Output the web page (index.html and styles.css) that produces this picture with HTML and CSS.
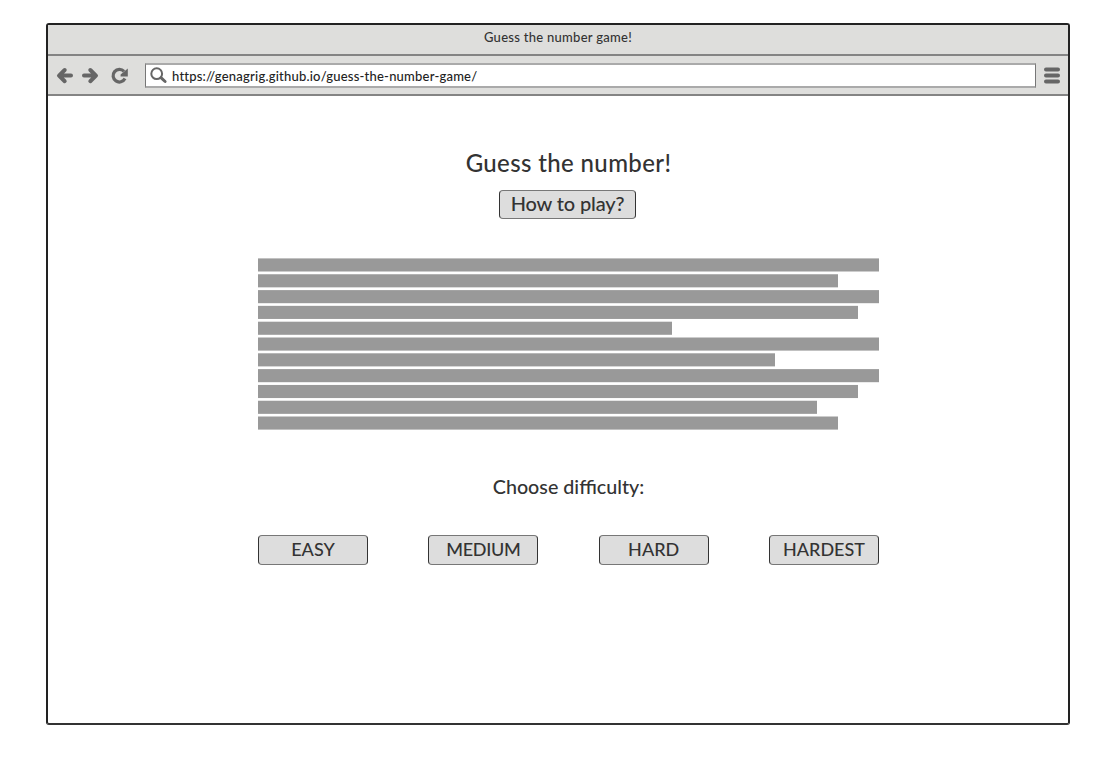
FILE: index.html
```html
<!DOCTYPE html>
<html lang="en">
<head>
<meta charset="utf-8">
<title>Guess the number game!</title>
<link rel="stylesheet" href="styles.css">
</head>
<body>
<div class="window">
  <header class="titlebar"><span class="window-title">Guess the number game!</span></header>
  <nav class="toolbar">
    <svg class="nav-icons" width="96" height="38" viewBox="0 0 96 38" fill="none" stroke="#666" stroke-width="4" stroke-linecap="round" stroke-linejoin="round">
      <path d="M16.7 14L11 19.6L16.7 25.2M11.5 19.6H23"/>
      <path d="M42.3 14L48 19.6L42.3 25.2M47.5 19.6H36"/>
      <path d="M76 15.4A6.3 6.3 0 1 0 77 22.6" stroke-width="3.2" stroke-linecap="butt"/>
      <path d="M79.8 12.4V20.6H72.6V18.4Z" fill="#666" stroke="none"/>
    </svg>
    <div class="address">
      <svg class="search" width="18" height="18" viewBox="0 0 18 18" fill="none" stroke="#666">
        <circle cx="6.7" cy="6.7" r="5.4" stroke-width="2"/>
        <path d="M11.2 10.9L15.1 14.5" stroke-width="3" stroke-linecap="round"/>
      </svg>
      <span class="url">https://genagrig.github.io/guess-the-number-game/</span>
    </div>
    <svg class="menu" width="16" height="17" viewBox="0 0 16 17" stroke="#666" stroke-width="4" stroke-linecap="round">
      <path d="M2 2.5H14M2 8.5H14M2 14.5H14"/>
    </svg>
  </nav>
  <main class="page">
    <h1 class="heading"><span>Guess the number!</span></h1>
    <button class="button help"><span>How to play?</span></button>
    <svg class="bars" width="621" height="173" viewBox="0 0 621 173" fill="#999">
      <rect y=".4" width="621" height="13.1"/>
      <rect y="16.25" width="580" height="13.1"/>
      <rect y="32.1" width="621" height="13.1"/>
      <rect y="47.85" width="600" height="13.1"/>
      <rect y="63.7" width="414" height="13.1"/>
      <rect y="79.5" width="621" height="13.1"/>
      <rect y="95.3" width="517" height="13.1"/>
      <rect y="111.1" width="621" height="13.1"/>
      <rect y="126.95" width="600" height="13.1"/>
      <rect y="142.75" width="559" height="13.1"/>
      <rect y="158.5" width="580" height="13.1"/>
    </svg>
    <h2 class="choose"><span>Choose difficulty:</span></h2>
    <div class="levels">
      <button class="button level">EASY</button>
      <button class="button level medium">MEDIUM</button>
      <button class="button level">HARD</button>
      <button class="button level">HARDEST</button>
    </div>
  </main>
</div>
</body>
</html>
```
FILE: styles.css
```css
* { box-sizing: border-box; }
body {
  margin: 0;
  padding: 23px 37px 0 46px;
  height: 757px;
  background: #fff;
  color: #333;
  font-family: Lato, "Open Sans", sans-serif;
  font-weight: 500;
}
.window {
  width: 1024px;
  height: 702px;
  border: 2px solid #222;
  border-bottom-color: #333;
  border-radius: 3px;
  background: #fff;
  display: flex;
  flex-direction: column;
}
.titlebar {
  height: 31px;
  background: #dededc;
  border-bottom: 2px solid #848484;
  text-align: center;
  font-size: 13px;
  line-height: 24px;
  letter-spacing: .28px;
}
.toolbar {
  height: 40px;
  background: #dededc;
  border-bottom: 2px solid #848484;
  display: flex;
  align-items: flex-start;
}
.nav-icons { margin-right: 1px; }
.address {
  width: 891px;
  height: 25px;
  margin-top: 7px;
  border: 1px solid #777;
  border-top: 2px solid #aaa;
  border-bottom: 2px solid #aaa;
  background: #fff;
  display: flex;
  align-items: center;
}
.search { margin: 1px 4px 0 4px; }
.url { color: #222; font-size: 13px; line-height: 20px; letter-spacing: .21px; white-space: nowrap; }
.menu { margin: 11px 0 0 8px; }
.page {
  display: flex;
  flex-direction: column;
  align-items: center;
  width: 621px;
  margin-left: 210px;
  padding-top: 50px;
}
.heading { margin: 0; height: 44px; font-size: 24px; line-height: 34px; font-weight: 500; letter-spacing: .37px; white-space: nowrap; }
.button {
  border: 1px solid #333;
  border-top-color: #777;
  border-bottom-color: #777;
  border-radius: 4px;
  background: #ddd;
  color: #333;
  padding: 0;
  font-family: inherit;
  font-weight: 500;
  white-space: nowrap;
}
.help { width: 137px; height: 29px; margin-right: 2px; padding-bottom: 2px; font-size: 20px; line-height: 25px; letter-spacing: -.14px; }
.bars { margin-top: 39px; }
.choose { margin: 43px 0 0; font-size: 19.7px; line-height: 26px; font-weight: 500; white-space: nowrap; }
.levels { width: 621px; margin-top: 35px; display: flex; justify-content: space-between; }
.level { width: 110px; height: 30px; padding-bottom: 1px; font-size: 18px; line-height: 27px; }
.medium { letter-spacing: -.3px; }
```
